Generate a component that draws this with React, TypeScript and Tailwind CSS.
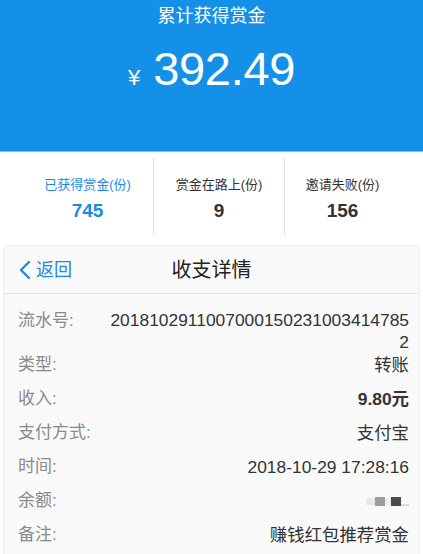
const font = {
  fontFamily: '"Liberation Sans", "Noto Sans CJK SC", sans-serif',
};

type Row = { label: string; value: React.ReactNode; bold?: boolean };

const Stat = ({
  label,
  value,
  active,
  divider,
}: {
  label: string;
  value: string;
  active?: boolean;
  divider?: boolean;
}) => (
  <div
    className={`flex flex-col items-center pt-[19px] h-[78px] mt-[6px] ${
      divider ? "border-l border-[#e3e3e3]" : ""
    }`}
  >
    <div
      className={`text-[13px] leading-[16px] ${
        active ? "text-[#1b8ae3]" : "text-[#333333]"
      }`}
    >
      {label}
    </div>
    <div
      className={`mt-[8px] text-[19px] leading-[20px] font-bold ${
        active ? "text-[#1b8ae3]" : "text-[#333333]"
      }`}
    >
      {value}
    </div>
  </div>
);

const BlurredBalance = () => (
  <div className="flex items-center justify-end h-[10px]">
    <div className="w-[9px] h-[7px] bg-[#e8e8e8]" />
    <div className="w-[10px] h-[9px] bg-[#9c9c9c]" />
    <div className="w-[6px] h-[7px] bg-[#eeeeee]" />
    <div className="w-[10px] h-[9px] bg-[#4a4a4a]" />
    <div className="w-[8px] h-[2px] bg-[#dddddd] self-end" />
  </div>
);

export default function App() {
  const rows: Row[] = [
    { label: "类型:", value: "转账" },
    { label: "收入:", value: "9.80元", bold: true },
    { label: "支付方式:", value: "支付宝" },
    { label: "时间:", value: "2018-10-29 17:28:16" },
    { label: "余额:", value: <BlurredBalance /> },
    { label: "备注:", value: "赚钱红包推荐赏金" },
  ];

  return (
    <div className="w-[423px] h-[554px] overflow-hidden bg-white" style={font}>
      {/* header */}
      <div className="h-[151px] bg-[#1490e8] flex flex-col items-center text-white">
        <div className="mt-[5px] text-[18px] leading-[22px]">累计获得赏金</div>
        <div className="mt-[18px] flex items-baseline">
          <span className="text-[22px] leading-none mr-[13px]">¥</span>
          <span className="text-[47px] leading-[48px] tracking-[-0.3px]">
            392.49
          </span>
        </div>
      </div>
      <div className="h-px bg-[#7cc0f2]" />

      {/* stats */}
      <div className="grid grid-cols-[131px_131px_116px] pl-[22px] h-[86px]">
        <Stat label="已获得赏金(份)" value="745" active />
        <Stat label="赏金在路上(份)" value="9" divider />
        <Stat label="邀请失败(份)" value="156" divider />
      </div>

      {/* detail card */}
      <div className="mt-[7px] mx-[3px] w-[417px] h-[320px] bg-[#f9f9f9] border border-[#ededed] rounded-t-[4px]">
        <div className="relative h-[48px] flex items-center border-b border-[#e6e6e6]">
          <div className="flex items-center pl-[14px] text-[#1b8ae3]">
            <svg width="14" height="20" viewBox="0 0 14 20" fill="none">
              <path
                d="M11 2 L3 10 L11 18"
                stroke="#1b8ae3"
                strokeWidth="2.4"
                strokeLinecap="round"
                strokeLinejoin="round"
              />
            </svg>
            <span className="ml-[4px] text-[18px] leading-[22px]">返回</span>
          </div>
          <div className="absolute left-0 right-0 text-center text-[20px] leading-[24px] text-[#222222] pointer-events-none">
            收支详情
          </div>
        </div>

        <div className="pl-[14px] pr-[10px] pt-[15px] text-[17px]">
          <div className="flex items-start -mb-[5px]">
            <div className="w-[90px] shrink-0 text-[#8a8a8a] leading-[22px] pt-[1px]">
              流水号:
            </div>
            <div className="flex-1 text-right break-all text-[#333333] text-[17.4px] leading-[22px]">
              20181029110070001502310034147852
            </div>
          </div>
          {rows.map((row) => (
            <div key={row.label} className="flex items-center h-[34px]">
              <div className="w-[90px] shrink-0 text-[#8a8a8a]">
                {row.label}
              </div>
              <div
                className={`flex-1 text-right text-[#333333] text-[17.4px] ${
                  row.bold ? "font-bold" : ""
                }`}
              >
                {row.value}
              </div>
            </div>
          ))}
        </div>
      </div>
    </div>
  );
}
